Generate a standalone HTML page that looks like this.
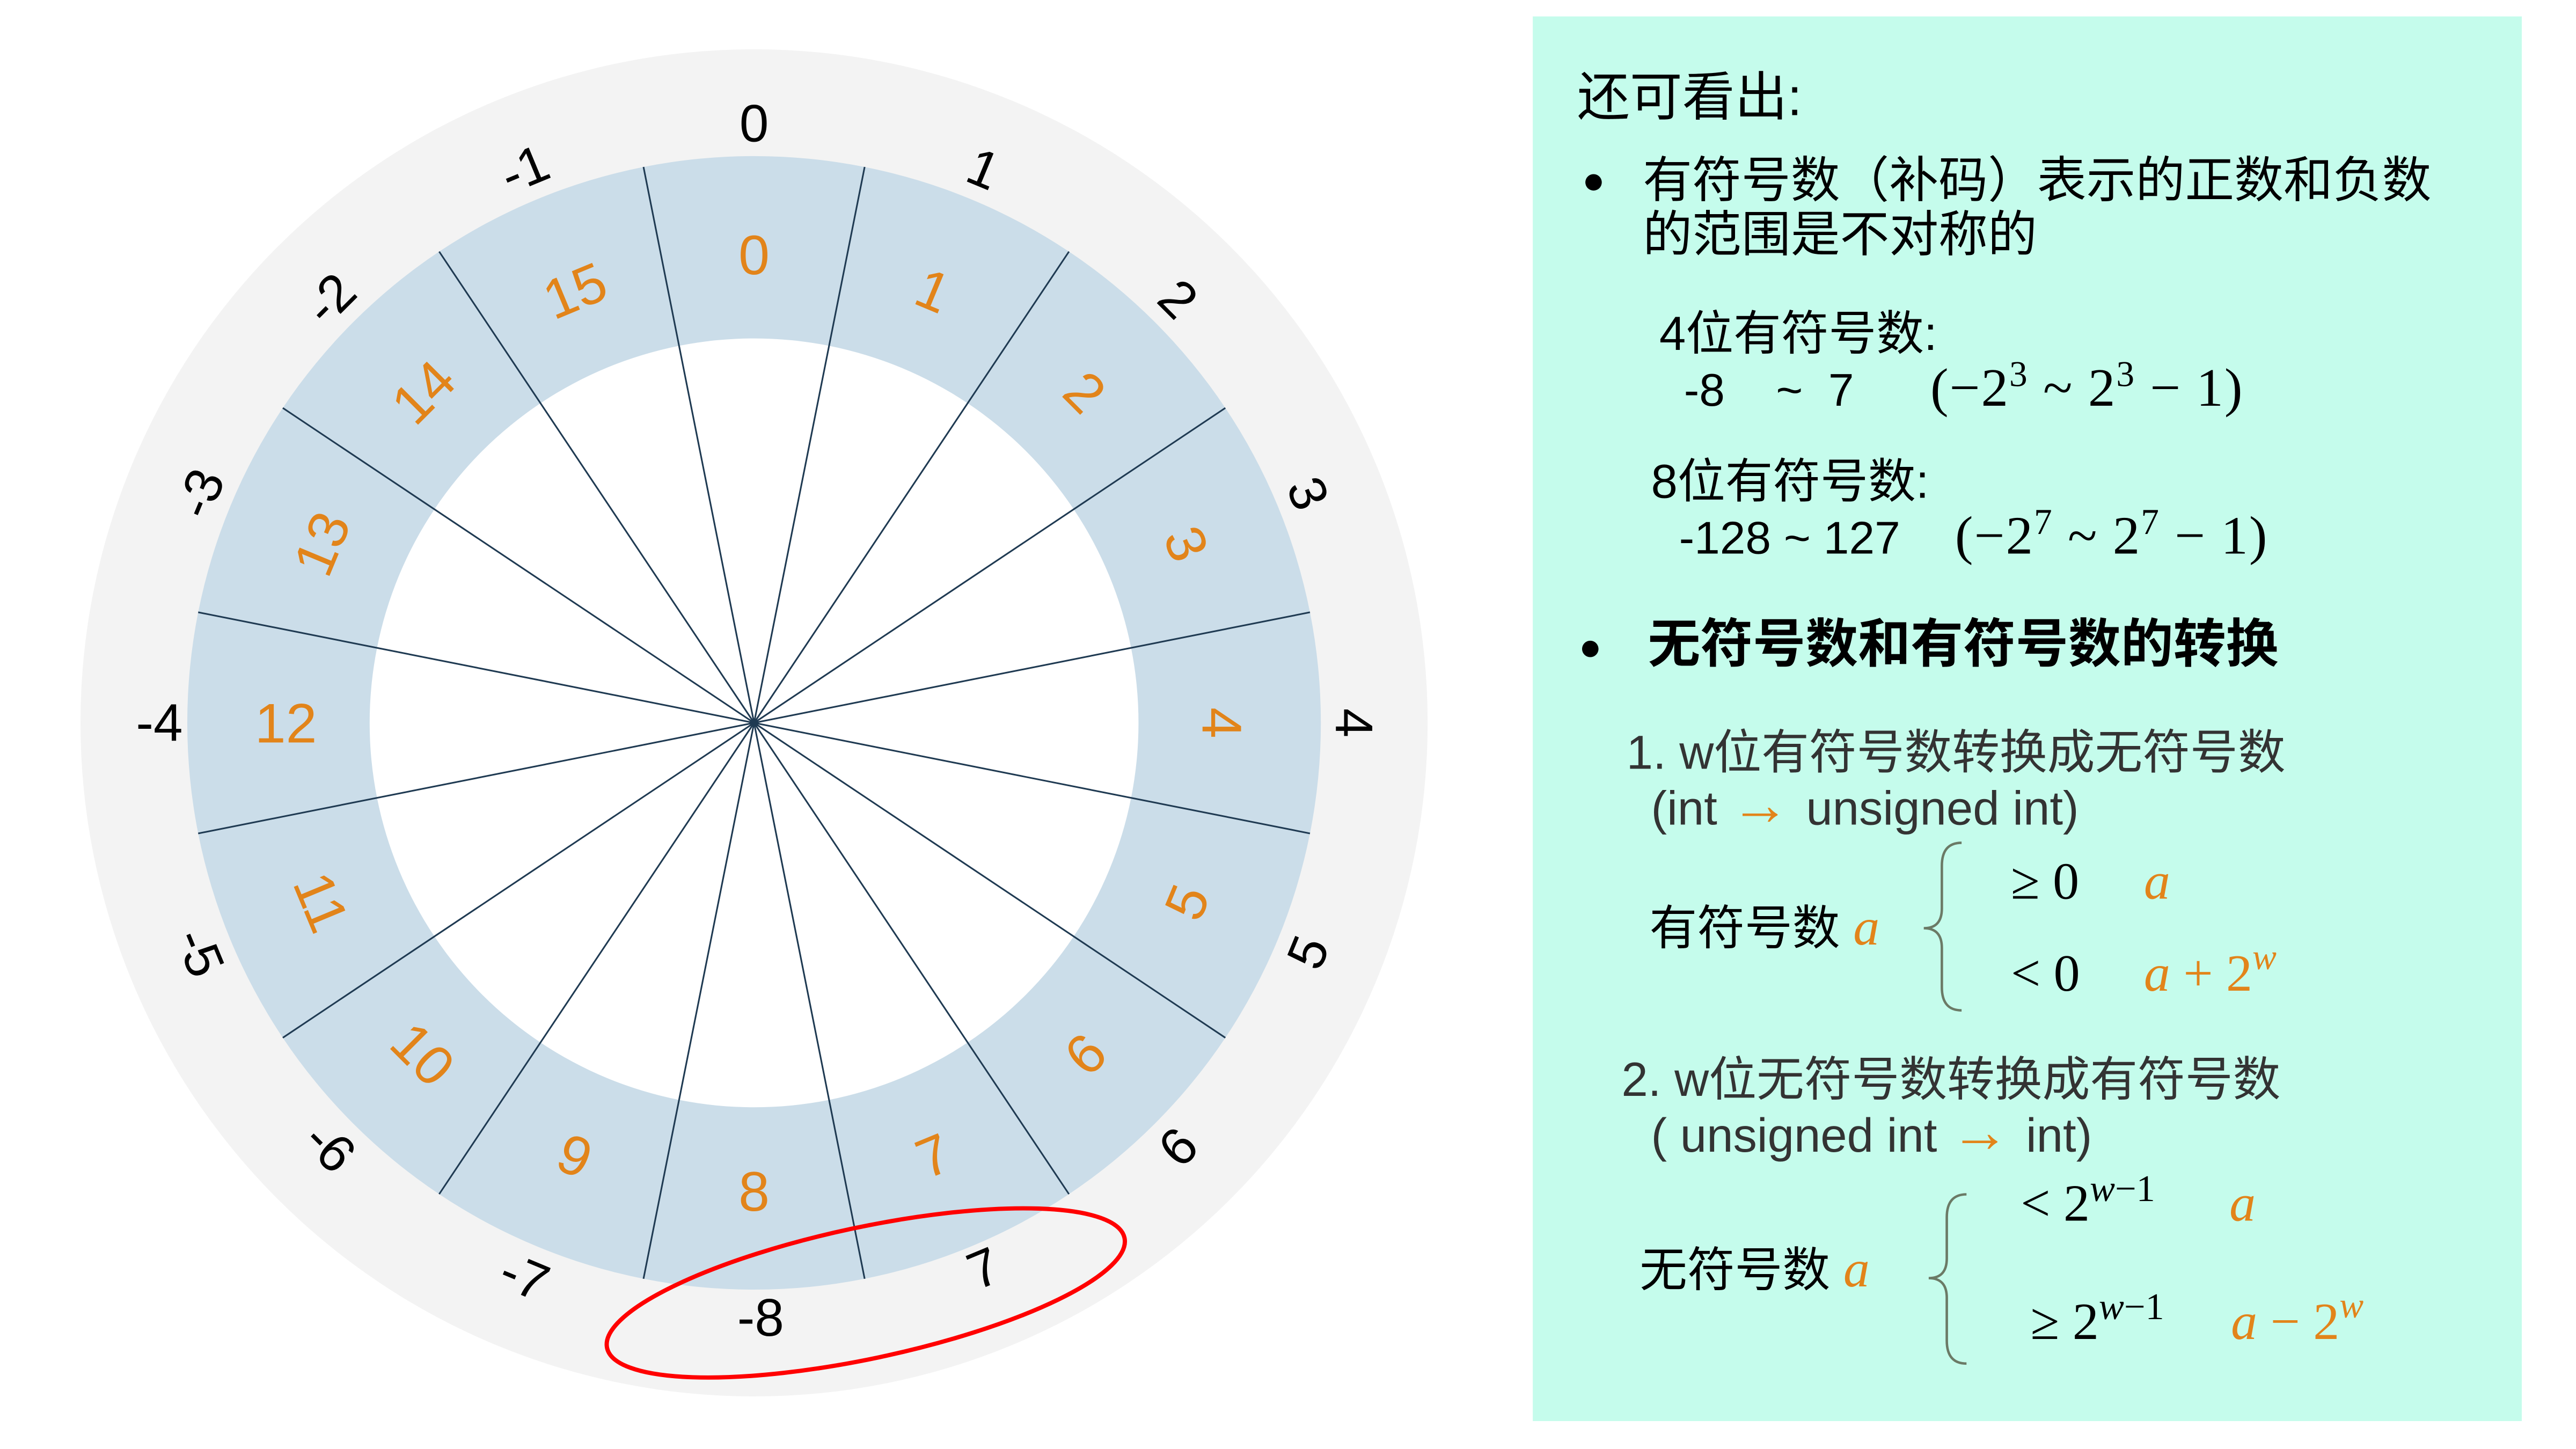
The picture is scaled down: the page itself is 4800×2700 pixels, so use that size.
<!DOCTYPE html>
<html><head><meta charset="utf-8"><style>
html,body{margin:0;padding:0;background:#fff;}
svg{display:block;}
.cj{font-family:"Liberation Sans","Noto Sans CJK SC",sans-serif;}
.m{font-family:"Liberation Serif","DejaVu Serif",serif;}
</style></head><body>
<svg width="4800" height="2700" viewBox="0 0 1568 882" xmlns="http://www.w3.org/2000/svg">
<rect width="1568" height="882" fill="#fff"/>
<circle cx="459" cy="440" r="410" fill="#f3f3f3"/>
<circle cx="459" cy="440" r="345" fill="#cbdde9"/>
<circle cx="459" cy="440" r="234" fill="#fff"/>
<g stroke="#1f3a52" stroke-width="1">
<line x1="459" y1="95" x2="459" y2="785" transform="rotate(11.25 459 440)"/>
<line x1="459" y1="95" x2="459" y2="785" transform="rotate(33.75 459 440)"/>
<line x1="459" y1="95" x2="459" y2="785" transform="rotate(56.25 459 440)"/>
<line x1="459" y1="95" x2="459" y2="785" transform="rotate(78.75 459 440)"/>
<line x1="459" y1="95" x2="459" y2="785" transform="rotate(101.25 459 440)"/>
<line x1="459" y1="95" x2="459" y2="785" transform="rotate(123.75 459 440)"/>
<line x1="459" y1="95" x2="459" y2="785" transform="rotate(146.25 459 440)"/>
<line x1="459" y1="95" x2="459" y2="785" transform="rotate(168.75 459 440)"/>
</g>
<g font-family="Liberation Sans, DejaVu Sans, sans-serif" font-size="34" fill="#e2841a" text-anchor="middle">
<text transform="translate(459,155) rotate(0)" dy="12">0</text>
<text transform="translate(568.1,176.7) rotate(22.5)" dy="12">1</text>
<text transform="translate(660.5,238.5) rotate(45)" dy="12">2</text>
<text transform="translate(722.3,330.9) rotate(67.5)" dy="12">3</text>
<text transform="translate(744,440) rotate(90)" dy="12">4</text>
<text transform="translate(722.3,549.1) rotate(-67.5)" dy="12">5</text>
<text transform="translate(660.5,641.5) rotate(-45)" dy="12">6</text>
<text transform="translate(568.1,703.3) rotate(-22.5)" dy="12">7</text>
<text transform="translate(459,725) rotate(0)" dy="12">8</text>
<text transform="translate(349.9,703.3) rotate(22.5)" dy="12">9</text>
<text transform="translate(257.5,641.5) rotate(45)" dy="12">10</text>
<text transform="translate(195.7,549.1) rotate(67.5)" dy="12">11</text>
<text transform="translate(174,440) rotate(0)" dy="12">12</text>
<text transform="translate(195.7,330.9) rotate(-67.5)" dy="12">13</text>
<text transform="translate(257.5,238.5) rotate(-45)" dy="12">14</text>
<text transform="translate(349.9,176.7) rotate(-22.5)" dy="12">15</text>
</g>
<g font-family="Liberation Sans, DejaVu Sans, sans-serif" font-size="32" fill="#000" text-anchor="middle">
<text transform="translate(459,75) rotate(0)" dy="11">0</text>
<text transform="translate(598.7,102.8) rotate(22.5)" dy="11">1</text>
<text transform="translate(717.1,181.9) rotate(45)" dy="11">2</text>
<text transform="translate(796.2,300.3) rotate(67.5)" dy="11">3</text>
<text transform="translate(824,440) rotate(90)" dy="11">4</text>
<text transform="translate(796.2,579.7) rotate(-67.5)" dy="11">5</text>
<text transform="translate(717.1,698.1) rotate(-45)" dy="11">6</text>
<text transform="translate(598.7,772) rotate(-22.5)" dy="11">7</text>
<text transform="translate(463,802) rotate(0)" dy="11">-8</text>
<text transform="translate(319.3,777.2) rotate(22.5)" dy="11">-7</text>
<text transform="translate(200.9,698.1) rotate(45)" dy="11">-6</text>
<text transform="translate(121.8,579.7) rotate(67.5)" dy="11">-5</text>
<text transform="translate(97,440) rotate(0)" dy="11">-4</text>
<text transform="translate(121.8,300.3) rotate(-67.5)" dy="11">-3</text>
<text transform="translate(200.9,181.9) rotate(-45)" dy="11">-2</text>
<text transform="translate(319.3,102.8) rotate(-22.5)" dy="11">-1</text>
</g>
<ellipse cx="527" cy="787" rx="161" ry="40" transform="rotate(-12 527 787)" fill="none" stroke="#ff0000" stroke-width="2.6"/>

<rect x="933" y="10" width="602" height="855" fill="#c5fcec"/>
<g class="cj" fill="#000">
<text x="960" y="70" font-size="32">还可看出:</text>
<circle cx="970" cy="111" r="5"/>
<text x="1000" y="120" font-size="30">有符号数（补码）表示的正数和负数</text>
<text x="1000" y="153" font-size="30">的范围是不对称的</text>
<text x="1010" y="213" font-size="29">4位有符号数:</text>
<text x="1025" y="247" font-size="28" xml:space="preserve">-8    ~  7</text>
<text x="1005" y="303" font-size="29">8位有符号数:</text>
<text x="1022" y="337" font-size="28">-128 ~ 127</text>
<circle cx="968" cy="395" r="5"/>
<text x="1003" y="403" font-size="32" font-weight="bold">无符号数和有符号数的转换</text>
</g>
<g class="m" fill="#000" font-size="33">
<text x="1175" y="247" textLength="190">(−2<tspan dy="-12" font-size="22">3</tspan><tspan dy="12"> ~ 2</tspan><tspan dy="-12" font-size="22">3</tspan><tspan dy="12"> − 1)</tspan></text>
<text x="1190" y="337" textLength="190">(−2<tspan dy="-12" font-size="22">7</tspan><tspan dy="12"> ~ 2</tspan><tspan dy="-12" font-size="22">7</tspan><tspan dy="12"> − 1)</tspan></text>
</g>
<g class="cj" fill="#333" font-size="29">
<text x="990" y="468">1. w位有符号数转换成无符号数</text>
<text x="1005" y="502">(int <tspan fill="#e2841a" font-size="36"> → </tspan> unsigned int)</text>
<text x="987" y="667">2. w位无符号数转换成有符号数</text>
<text x="1005" y="701">( unsigned int <tspan fill="#e2841a" font-size="36"> → </tspan> int)</text>
</g>
<g class="cj" fill="#000" font-size="29">
<text x="1004" y="575">有符号数 <tspan class="m" font-style="italic" fill="#e2841a" font-size="32">a</tspan></text>
<text x="998" y="783">无符号数 <tspan class="m" font-style="italic" fill="#e2841a" font-size="32">a</tspan></text>
</g>
<g fill="none" stroke="#6b7a66" stroke-width="1.5">
<path d="M1194,513 Q1182,513 1182,527 L1182,553 Q1182,565 1171,565 Q1182,565 1182,577 L1182,601 Q1182,615 1194,615"/>
<path d="M1197,727 Q1185,727 1185,741 L1185,766 Q1185,778 1174,778 Q1185,778 1185,790 L1185,816 Q1185,830 1197,830"/>
</g>
<g class="m" font-size="32" fill="#000">
<text x="1224" y="547">≥ 0</text>
<text x="1305" y="547" fill="#e2841a" font-style="italic">a</text>
<text x="1224" y="603">&lt; 0</text>
<text x="1305" y="603" fill="#e2841a"><tspan font-style="italic">a</tspan> + 2<tspan dy="-13" font-size="22" font-style="italic">w</tspan></text>
<text x="1230" y="743">&lt; 2<tspan dy="-12" font-size="23" font-style="italic">w</tspan><tspan font-size="23">−1</tspan></text>
<text x="1357" y="743" fill="#e2841a" font-style="italic">a</text>
<text x="1236" y="815">≥ 2<tspan dy="-12" font-size="23" font-style="italic">w</tspan><tspan font-size="23">−1</tspan></text>
<text x="1358" y="815" fill="#e2841a"><tspan font-style="italic">a</tspan> − 2<tspan dy="-13" font-size="22" font-style="italic">w</tspan></text>
</g>
</svg>
</body></html>
